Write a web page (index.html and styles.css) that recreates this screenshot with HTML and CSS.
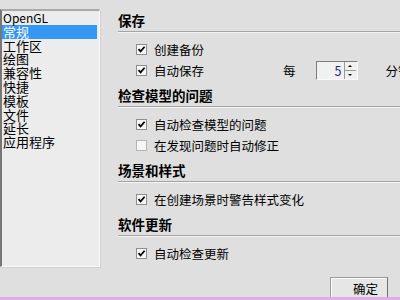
FILE: index.html
```html
<!DOCTYPE html>
<html lang="zh-CN">
<head>
<meta charset="utf-8">
<link rel="stylesheet" href="styles.css">
</head>
<body>
<div class="window">
  <div class="content">
    <div class="list">
      <div class="item latin">OpenGL</div>
      <div class="item selected">常规</div>
      <div class="item">工作区</div>
      <div class="item">绘图</div>
      <div class="item">兼容性</div>
      <div class="item">快捷</div>
      <div class="item">模板</div>
      <div class="item">文件</div>
      <div class="item">延长</div>
      <div class="item">应用程序</div>
    </div>
    <div class="panel">
      <div class="section">
        <div class="header">保存</div>
        <div class="rows">
          <div class="row"><span class="check on"><svg viewBox="0 0 9 9" width="9" height="9"><path d="M1.5 4.2 L3.6 6.4 L7.6 1.8" fill="none" stroke="#000" stroke-width="1.7"/></svg></span><span class="label">创建备份</span></div>
          <div class="row"><span class="check on"><svg viewBox="0 0 9 9" width="9" height="9"><path d="M1.5 4.2 L3.6 6.4 L7.6 1.8" fill="none" stroke="#000" stroke-width="1.7"/></svg></span><span class="label fixed">自动保存</span><span class="label">每</span><span class="spin"><span class="spin-val">5</span><span class="spin-btns"><span class="up"></span><span class="down"></span></span></span><span class="label unit">分钟</span></div>
        </div>
      </div>
      <div class="section">
        <div class="header">检查模型的问题</div>
        <div class="rows">
          <div class="row"><span class="check on"><svg viewBox="0 0 9 9" width="9" height="9"><path d="M1.5 4.2 L3.6 6.4 L7.6 1.8" fill="none" stroke="#000" stroke-width="1.7"/></svg></span><span class="label">自动检查模型的问题</span></div>
          <div class="row"><span class="check off"></span><span class="label">在发现问题时自动修正</span></div>
        </div>
      </div>
      <div class="section">
        <div class="header">场景和样式</div>
        <div class="rows">
          <div class="row"><span class="check on"><svg viewBox="0 0 9 9" width="9" height="9"><path d="M1.5 4.2 L3.6 6.4 L7.6 1.8" fill="none" stroke="#000" stroke-width="1.7"/></svg></span><span class="label">在创建场景时警告样式变化</span></div>
        </div>
      </div>
      <div class="section">
        <div class="header">软件更新</div>
        <div class="rows">
          <div class="row"><span class="check on"><svg viewBox="0 0 9 9" width="9" height="9"><path d="M1.5 4.2 L3.6 6.4 L7.6 1.8" fill="none" stroke="#000" stroke-width="1.7"/></svg></span><span class="label">自动检查更新</span></div>
        </div>
      </div>
      <div class="buttons"><button class="btn">确定</button></div>
    </div>
  </div>
  <div class="strip"></div>
</div>
</body>
</html>
```
FILE: styles.css
```css
html, body {
  margin: 0;
  padding: 0;
}
body {
  width: 400px;
  height: 300px;
  overflow: hidden;
  background: #dfdfdf;
  font-family: "Noto Sans CJK SC", "Liberation Sans", sans-serif;
  color: #000;
}
.window {
  display: flex;
  flex-direction: column;
  height: 300px;
}
.content {
  display: flex;
  height: 297px;
  overflow: hidden;
}
.strip {
  height: 3px;
  background: #dcaee2;
}
.list {
  flex: none;
  width: 97px;
  height: 255px;
  margin-top: 9px;
  border-top: 2px solid #a9a9a9;
  border-left: 2px solid #777;
  border-right: 1px solid #fbfbfb;
  border-bottom: 1px solid #fbfbfb;
  box-shadow: 1px 1px 0 #cfcfcf;
  background: #ececec;
  font-size: 13px;
  line-height: 13.8px;
}
.item {
  padding-left: 1px;
  margin-right: 2px;
  white-space: nowrap;
}
.item.latin {
  font-size: 12px;
}
.item.selected {
  background: #3597f4;
  color: #fff;
}
.panel {
  flex: 1;
  display: flex;
  flex-direction: column;
  margin-left: 18px;
  padding-top: 9px;
  min-width: 0;
}
.section + .section {
  margin-top: 3px;
}
.header {
  height: 22px;
  line-height: 22px;
  font-size: 13.5px;
  font-weight: bold;
  border-bottom: 1px solid #a4a4a4;
  box-shadow: 0 1px 0 #f4f4f4;
}
.rows {
  padding-top: 7px;
}
.row {
  display: flex;
  align-items: center;
  height: 21px;
  padding-left: 18px;
  white-space: nowrap;
  font-size: 12.5px;
}
.check {
  flex: none;
  width: 11px;
  height: 11px;
  box-sizing: border-box;
  border: 1px solid #8e8e8e;
  background: #f6f6f6;
  display: flex;
  align-items: center;
  justify-content: center;
  margin-right: 7px;
}
.check.off {
  border-color: #b4b4b4;
}
.label.fixed {
  width: 129px;
  flex: none;
}
.spin {
  flex: none;
  display: flex;
  width: 42px;
  height: 19px;
  box-sizing: border-box;
  margin-left: 20px;
  border: 1px solid;
  border-color: #7c7c7c #fafafa #fafafa #7c7c7c;
  background: #f1f1f1;
}
.spin-val {
  flex: 1;
  text-align: right;
  padding-right: 2px;
  line-height: 17px;
  color: #1e2a8a;
}
.spin-btns {
  width: 11px;
  display: flex;
  flex-direction: column;
  border-left: 1px solid #9a9a9a;
  margin-right: 1px;
}
.spin-btns span {
  flex: 1;
  display: flex;
  align-items: center;
  justify-content: center;
}
.spin-btns .up {
  border-bottom: 1px solid #9a9a9a;
}
.spin-btns .up::after {
  content: "";
  border-left: 2px solid transparent;
  border-right: 2px solid transparent;
  border-bottom: 2px solid #000;
}
.spin-btns .down::after {
  content: "";
  border-left: 2px solid transparent;
  border-right: 2px solid transparent;
  border-top: 2px solid #000;
}
.label.unit {
  margin-left: 28px;
}
.buttons {
  display: flex;
  justify-content: flex-end;
  padding-right: 12px;
  margin-top: 13px;
}
.btn {
  flex: none;
  width: 58px;
  height: 24px;
  box-sizing: border-box;
  padding: 0 0 0 22px;
  text-align: left;
  font-family: "Noto Sans CJK SC", sans-serif;
  font-size: 12.5px;
  line-height: 22px;
  color: #000;
  background: #e6e6e6;
  border: 1px solid;
  border-color: #9c9c9c #707070 #707070 #9c9c9c;
  box-shadow: inset 1px 1px 0 #fafafa;
  border-radius: 0;
}
```
